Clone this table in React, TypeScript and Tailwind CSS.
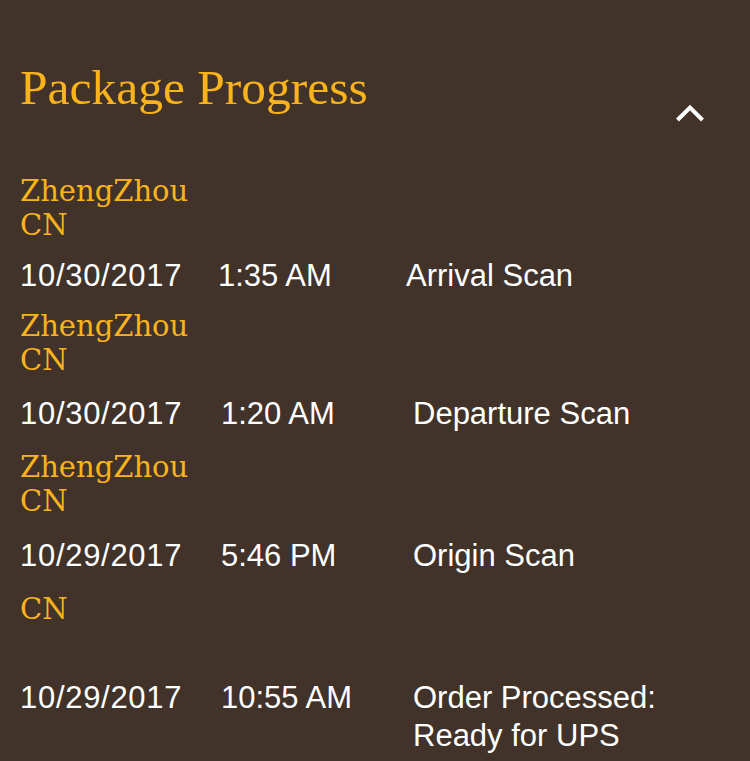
import React from "react";

type Row = {
  city: string[];
  cityMt: string;
  dateMt: string;
  date: string;
  time: string;
  desc: string[];
  dateW: string;
  timeW: string;
};

const rows: Row[] = [
  {
    city: ["ZhengZhou", "CN"],
    cityMt: "mt-[59px]",
    dateMt: "mt-[17px]",
    date: "10/30/2017",
    time: "1:35 AM",
    desc: ["Arrival Scan"],
    dateW: "w-[198px]",
    timeW: "w-[188px]",
  },
  {
    city: ["ZhengZhou", "CN"],
    cityMt: "mt-[17px]",
    dateMt: "mt-[20px]",
    date: "10/30/2017",
    time: "1:20 AM",
    desc: ["Departure Scan"],
    dateW: "w-[201px]",
    timeW: "w-[192px]",
  },
  {
    city: ["ZhengZhou", "CN"],
    cityMt: "mt-[20px]",
    dateMt: "mt-[21px]",
    date: "10/29/2017",
    time: "5:46 PM",
    desc: ["Origin Scan"],
    dateW: "w-[201px]",
    timeW: "w-[192px]",
  },
  {
    city: ["CN", "\u00a0"],
    cityMt: "mt-[20px]",
    dateMt: "mt-[21px]",
    date: "10/29/2017",
    time: "10:55 AM",
    desc: ["Order Processed:", "Ready for UPS"],
    dateW: "w-[201px]",
    timeW: "w-[192px]",
  },
];

export default function App() {
  return (
    <div className="w-[750px] h-[761px] overflow-hidden bg-[#41332a] pl-5">
      <div className="flex h-[116px] items-start justify-between pr-[45px]">
        <h1 className="pt-[60px] text-[49.5px] leading-[56px] font-normal text-[#fbb31c] font-['Liberation_Serif',serif]">
          Package Progress
        </h1>
        <svg
          className="mt-[103px] shrink-0"
          width="30"
          height="19"
          viewBox="0 0 30 19"
          fill="none"
        >
          <polyline
            points="2.5,17 15,4.5 27.5,17"
            stroke="#ffffff"
            strokeWidth="4"
            strokeLinecap="butt"
            strokeLinejoin="miter"
          />
        </svg>
      </div>

      {rows.map((r, i) => (
        <div key={i}>
          <div
            className={`${r.cityMt} text-[29px] leading-[33.5px] text-[#fbb31c] font-['DejaVu_Serif',serif]`}
          >
            {r.city.map((c, j) => (
              <div key={j}>{c}</div>
            ))}
          </div>
          <div
            className={`${r.dateMt} flex items-start text-[31px] leading-[34px] text-white font-['Liberation_Sans',Arial,sans-serif]`}
          >
            <div className={`${r.dateW} tracking-[0.7px]`}>{r.date}</div>
            <div className={r.timeW}>{r.time}</div>
            <div className="flex flex-col gap-[4px]">
              {r.desc.map((d, j) => (
                <div key={j}>{d}</div>
              ))}
            </div>
          </div>
        </div>
      ))}
    </div>
  );
}
